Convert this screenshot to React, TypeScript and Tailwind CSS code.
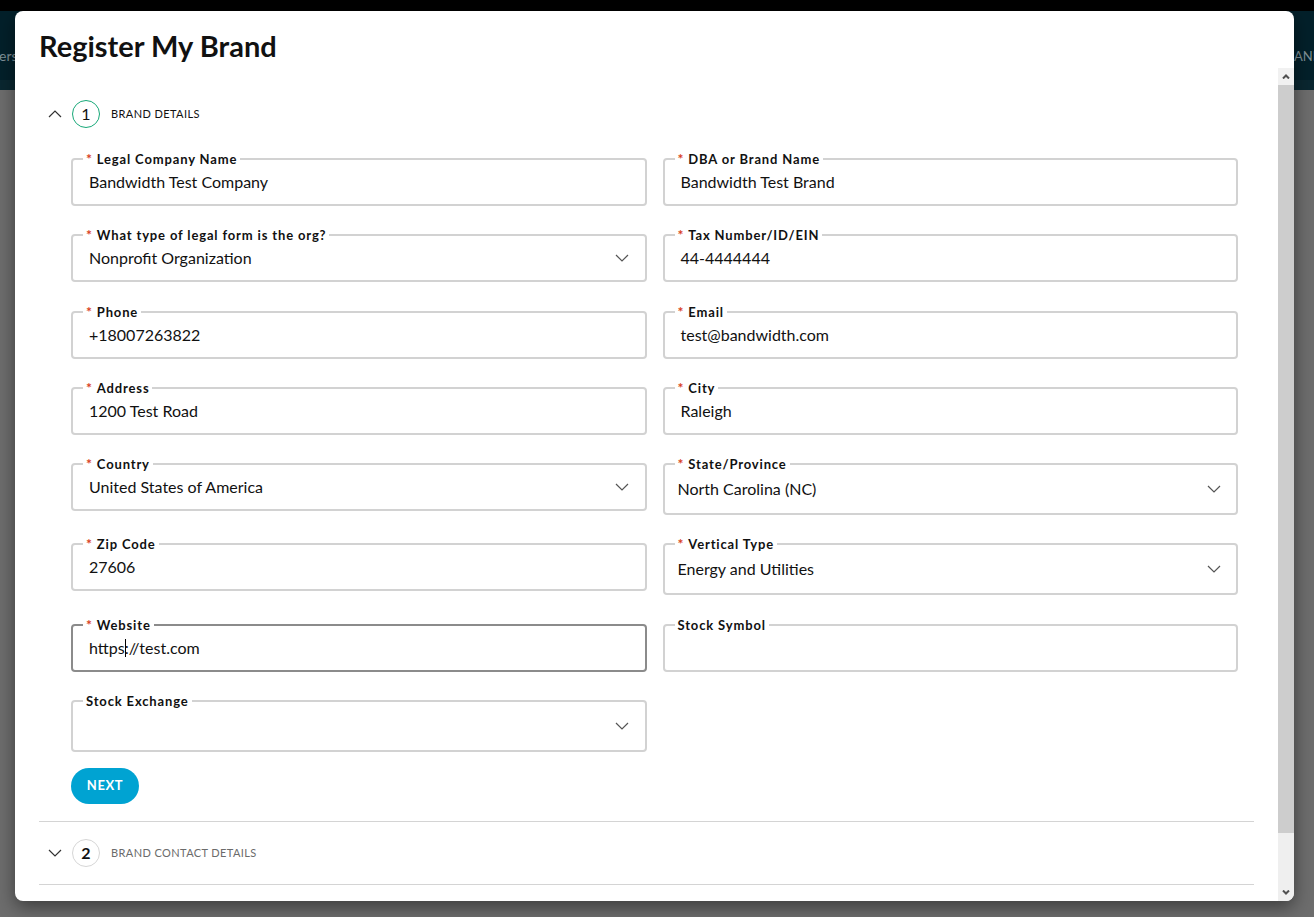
import React from 'react';

const font = { fontFamily: 'Lato, "Noto Sans", Arial, sans-serif' };

function Chevron({ up = false, className = '' }: { up?: boolean; className?: string }) {
  return (
    <svg width="14" height="8" viewBox="0 0 14 8" className={className}>
      <polyline
        points={up ? '1,7 7,1 13,7' : '1,1 7,7 13,1'}
        fill="none"
        stroke="currentColor"
        strokeWidth="1.2"
      />
    </svg>
  );
}

type FieldProps = {
  label: string;
  value?: string;
  required?: boolean;
  select?: boolean;
  tall?: boolean;
  focused?: boolean;
  inset?: boolean;
  children?: React.ReactNode;
};

function Field({ label, value, required = true, select, tall, focused, inset, children }: FieldProps) {
  return (
    <fieldset
      className={
        'rounded-[4px] border-2 ' + (focused ? 'border-[#8b8b8b]' : 'border-[#d2d2d2]')
      }
    >
      <legend className="ml-[10px] h-[12px] px-[3px] text-[13px] leading-[12px] font-bold tracking-[0.85px] text-[#111]">
        {required && <span className="mr-[4px] text-[14px] leading-[12px] text-[#d8401c]">*</span>}
        {label}
      </legend>
      <div
        className={
          'flex items-center justify-between pb-[5px] text-[16px] text-[#111] ' +
          (tall ? 'h-[43px] ' : 'h-[39px] ') +
          (inset ? 'pl-[13px] pr-[15px]' : 'pl-[16px] pr-[16px]')
        }
      >
        <span className="whitespace-nowrap">{children ?? value}</span>
        {select && <Chevron className="text-[#555]" />}
      </div>
    </fieldset>
  );
}

export default function App() {
  return (
    <div className="relative h-[917px] w-full overflow-hidden bg-[#6d6d6d]" style={font}>
      {/* page behind the dialog */}
      <div className="h-[11px] bg-black" />
      <div className="flex h-[69px] items-end justify-between bg-[#03202a] pb-[14px] text-[14px] text-[#7f9097]">
        <span className="-ml-[1px]">ers</span>
        <span className="w-[20px] overflow-hidden whitespace-nowrap text-[13px]">AND</span>
      </div>
      <div className="h-[10px] bg-[#0a2730]" />

      {/* dialog */}
      <div className="absolute left-[15px] top-[11px] flex h-[890px] w-[1279px] flex-col overflow-hidden rounded-[8px] bg-white shadow-[0_6px_18px_rgba(0,0,0,0.45)]">
        <div className="h-[57px] px-6 pt-[19px]">
          <h1 className="text-[29px] leading-[32px] font-bold text-[#111]">Register My Brand</h1>
        </div>

        <div className="flex min-h-0 flex-1">
          <div className="flex-1 overflow-hidden px-6 pt-[22px]">
            {/* step 1 */}
            <div className="flex h-[48px] items-center">
              <Chevron up className="ml-[9px] text-[#333]" />
              <div className="ml-[10px] flex h-[28px] w-[28px] items-center justify-center rounded-full border-[1.5px] border-[#17a878] text-[16px] text-[#111]">
                1
              </div>
              <span className="ml-[11px] text-[11px] tracking-[0.4px] text-[#111]">BRAND DETAILS</span>
            </div>

            <div className="mt-[15px] pl-8 pr-4">
              <div className="grid grid-cols-2 items-start gap-x-4 gap-y-[23.3px]">
                <Field label="Legal Company Name" value="Bandwidth Test Company" />
                <Field label="DBA or Brand Name" value="Bandwidth Test Brand" />
                <Field label="What type of legal form is the org?" value="Nonprofit Organization" select />
                <Field label="Tax Number/ID/EIN" value="44-4444444" />
                <Field label="Phone" value="+18007263822" />
                <Field label="Email" value="test@bandwidth.com" />
                <Field label="Address" value="1200 Test Road" />
                <Field label="City" value="Raleigh" />
                <Field label="Country" value="United States of America" select />
                <Field label="State/Province" value="North Carolina (NC)" select tall inset />
                <Field label="Zip Code" value="27606" />
                <Field label="Vertical Type" value="Energy and Utilities" select tall inset />
                <Field label="Website" focused>
                  https<span className="inline-block h-[18px] w-px -mr-px translate-y-[3px] bg-black" />://test.com
                </Field>
                <Field label="Stock Symbol" value="" required={false} />
                <Field label="Stock Exchange" value="" required={false} select tall />
              </div>

              <button className="mt-[16px] flex h-[36px] w-[68px] items-center justify-center rounded-full bg-[#00a3d2] text-[13px] font-bold tracking-[0.6px] text-white">
                NEXT
              </button>
            </div>

            {/* step 2 */}
            <div className="mt-[17px] flex h-[64px] items-center border-y border-[#d4d4d4]">
              <Chevron className="ml-[9px] text-[#333]" />
              <div className="ml-[10px] flex h-[28px] w-[28px] items-center justify-center rounded-full border border-[#d6d6d6] text-[16px] font-bold text-[#111]">
                2
              </div>
              <span className="ml-[11px] text-[11px] tracking-[0.4px] text-[#6b6b6b]">BRAND CONTACT DETAILS</span>
            </div>
          </div>

          {/* scrollbar */}
          <div className="flex w-[16px] flex-col bg-[#efefef]">
            <div className="flex h-[17px] items-center justify-center bg-[#f1f1f1] text-[#505050]">
              <svg width="8" height="5" viewBox="0 0 8 5">
                <polyline points="1,4.5 4,1.5 7,4.5" fill="none" stroke="currentColor" strokeWidth="2" />
              </svg>
            </div>
            <div className="h-[748px] bg-[#cdcdcd]" />
            <div className="flex-1" />
            <div className="flex h-[17px] items-center justify-center text-[#505050]">
              <svg width="8" height="5" viewBox="0 0 8 5">
                <polyline points="1,0.5 4,3.5 7,0.5" fill="none" stroke="currentColor" strokeWidth="2" />
              </svg>
            </div>
          </div>
        </div>
      </div>
    </div>
  );
}
